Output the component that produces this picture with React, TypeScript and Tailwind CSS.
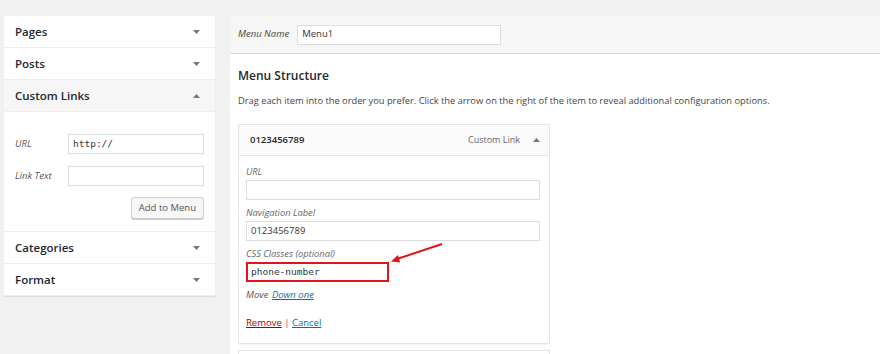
const sans = "font-['Segoe_UI','Open_Sans',sans-serif]";
const mono = "font-['DejaVu_Sans_Mono',monospace]";

function Caret({ up = false }: { up?: boolean }) {
  return (
    <svg width="7" height="4" viewBox="0 0 7 4" className="fill-[#72777c]">
      {up ? <path d="M0 4 L3.5 0 L7 4 Z" /> : <path d="M0 0 L7 0 L3.5 4 Z" />}
    </svg>
  );
}

function SideRow({ label, open = false }: { label: string; open?: boolean }) {
  return (
    <div
      className={`flex h-8 items-center justify-between border-b border-[#eee] px-[11px] pt-[1px] ${
        open ? 'bg-[#f6f6f6]' : 'bg-white'
      }`}
    >
      <span className="text-[11.5px] font-semibold text-[#23282d]">{label}</span>
      <span className="mr-[4px] flex">
        <Caret up={open} />
      </span>
    </div>
  );
}

function Field({
  label,
  value,
  code = false,
  highlight = false,
}: {
  label: string;
  value?: string;
  code?: boolean;
  highlight?: boolean;
}) {
  return (
    <div className="mb-[6px]">
      <div className="mb-[1px] h-[14px] text-[9.3px] leading-[14px] italic text-[#666]">{label}</div>
      <div
        className={`flex h-[20px] items-center px-[4px] text-[9.5px] text-[#32373c] ${
          highlight
            ? 'w-[143px] border-2 border-[#e2141b] pl-[3px]'
            : 'w-[294px] border border-[#ddd]'
        } ${code ? mono : ''}`}
      >
        {value}
      </div>
    </div>
  );
}

export default function App() {
  return (
    <div className={`relative flex h-[354px] w-[880px] overflow-hidden bg-[#f1f1f1] ${sans}`}>
      <div className="ml-[4px] mt-[16px] w-[211px] self-start bg-white shadow-[0_1px_1px_rgba(0,0,0,0.08)]">
        <SideRow label="Pages" />
        <SideRow label="Posts" />
        <SideRow label="Custom Links" open />
        <div className="border-b border-[#eee] px-[11px] pb-[12px] pt-[22px]">
          <div className="mb-[12px] flex items-center">
            <span className="w-[53px] text-[9.5px] italic text-[#555]">URL</span>
            <div className={`flex h-[20px] w-[136px] items-center border border-[#ddd] px-[4px] text-[9.5px] text-[#32373c] ${mono}`}>
              http://
            </div>
          </div>
          <div className="mb-[11px] flex items-center">
            <span className="w-[53px] text-[9.5px] italic text-[#555]">Link Text</span>
            <div className="h-[20px] w-[136px] border border-[#ddd]" />
          </div>
          <div className="flex justify-end">
            <div className="flex h-[22px] items-center rounded-[3px] border border-[#ccc] bg-[#f7f7f7] px-[7px] text-[9.5px] text-[#555] shadow-[0_1px_0_#ccc]">
              Add to Menu
            </div>
          </div>
        </div>
        <SideRow label="Categories" />
        <SideRow label="Format" />
      </div>

      <div className="ml-[15px] mt-[16px] flex-1 bg-white">
        <div className="flex h-[38px] items-center border-b border-[#ddd] bg-[#f6f6f6] px-[8px]">
          <span className="mr-[8px] text-[9.5px] italic text-[#444]">Menu Name</span>
          <div className="flex h-[20px] w-[204px] items-center border border-[#ddd] bg-white px-[4px] text-[9.5px] text-[#32373c]">
            Menu1
          </div>
        </div>
        <div className="px-[8px] pt-[14px]">
          <div className="h-[16px] text-[12px] leading-[16px] font-semibold text-[#23282d]">Menu Structure</div>
          <div className="mt-[10px] h-[13px] text-[9.3px] leading-[13px] text-[#444]">
            Drag each item into the order you prefer. Click the arrow on the right of the item to reveal additional configuration options.
          </div>
          <div className="mt-[17px] w-[312px] border border-[#e5e5e5] shadow-[0_1px_1px_rgba(0,0,0,0.04)]">
            <div className="flex h-[31px] items-center justify-between border-b border-[#e5e5e5] bg-[#fafafa] pl-[11px] pr-[9px]">
              <span className="text-[9.5px] font-semibold text-[#23282d]">0123456789</span>
              <span className="flex items-center gap-[13px] text-[9px] text-[#666]">
                Custom Link
                <Caret up />
              </span>
            </div>
            <div className="px-[7px] pt-[9px] pb-[13px]">
              <Field label="URL" />
              <Field label="Navigation Label" value="0123456789" />
              <Field label="CSS Classes (optional)" value="phone-number" code highlight />
              <div className="h-[14px] text-[9.5px] leading-[14px] italic text-[#555]">
                Move <span className="ml-[1px] text-[#0073aa] underline">Down one</span>
              </div>
              <div className="mt-[14px] h-[14px] text-[9.5px] leading-[14px] text-[#666]">
                <span className="text-[#a00] underline">Remove</span> |{' '}
                <span className="text-[#0073aa] underline">Cancel</span>
              </div>
            </div>
          </div>
          <div className="mt-[6px] h-[10px] w-[312px] border border-[#e5e5e5]" />
        </div>
      </div>

      <svg className="absolute left-[388px] top-[240px]" width="60" height="26" viewBox="0 0 60 26">
        <line x1="54" y1="4" x2="9" y2="19" stroke="#e2141b" strokeWidth="2" />
        <path d="M3 21.5 L10 15 L12 22.5 Z" fill="#e2141b" />
      </svg>
    </div>
  );
}
